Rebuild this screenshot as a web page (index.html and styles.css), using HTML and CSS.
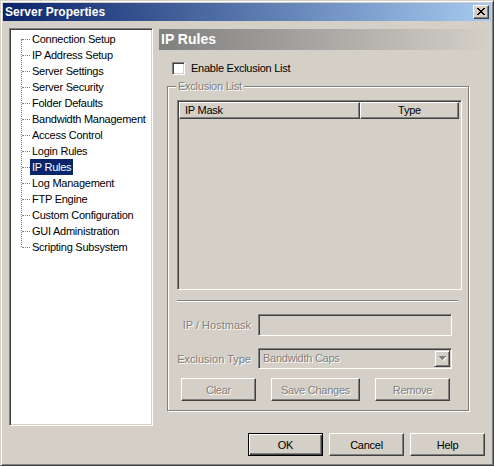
FILE: index.html
```html
<!DOCTYPE html>
<html>
<head>
<meta charset="utf-8">
<title>Server Properties</title>
<link rel="stylesheet" href="styles.css">
</head>
<body>
<div class="window">
  <div class="titlebar">
    <span class="title">Server Properties</span>
    <span class="close-btn">
      <svg width="8" height="7" viewBox="0 0 8 7" shape-rendering="crispEdges"><path fill="#000" d="M0 0h2v1H0zM6 0h2v1H6zM1 1h2v1H1zM5 1h2v1H5zM2 2h4v1H2zM3 3h2v1H3zM2 4h4v1H2zM1 5h2v1H1zM5 5h2v1H5zM0 6h2v1H0zM6 6h2v1H6z"/></svg>
    </span>
  </div>
  <div class="main">
    <div class="tree">
      <ul class="tree-list">
        <li><span>Connection Setup</span></li>
        <li><span>IP Address Setup</span></li>
        <li><span>Server Settings</span></li>
        <li><span>Server Security</span></li>
        <li><span>Folder Defaults</span></li>
        <li><span>Bandwidth Management</span></li>
        <li><span>Access Control</span></li>
        <li><span>Login Rules</span></li>
        <li><span class="selected">IP Rules</span></li>
        <li><span>Log Management</span></li>
        <li><span>FTP Engine</span></li>
        <li><span>Custom Configuration</span></li>
        <li><span>GUI Administration</span></li>
        <li><span>Scripting Subsystem</span></li>
      </ul>
    </div>
    <div class="pane">
      <div class="pane-header">IP Rules</div>
      <div class="check-row">
        <span class="checkbox"></span>
        <span class="check-label">Enable Exclusion List</span>
      </div>
      <div class="group">
        <div class="group-label disabled">Exclusion List</div>
        <div class="listview">
          <div class="lv-header">
            <div class="lv-col lv-col1">IP Mask</div>
            <div class="lv-col lv-col2">Type</div>
          </div>
        </div>
        <div class="separator"></div>
        <div class="form-row">
          <span class="form-label disabled">IP / Hostmask</span>
          <div class="field"></div>
        </div>
        <div class="form-row row-select">
          <span class="form-label disabled">Exclusion Type</span>
          <div class="field combo">
            <span class="combo-text disabled">Bandwidth Caps</span>
            <span class="combo-btn">
              <svg width="8" height="5" viewBox="0 0 8 5" shape-rendering="crispEdges">
                <path fill="#fff" d="M1 1h7v1H1zM2 2h5v1H2zM3 3h3v1H3zM4 4h1v1H4z"/>
                <path fill="#808080" d="M0 0h7v1H0zM1 1h5v1H1zM2 2h3v1H2zM3 3h1v1H3z"/>
              </svg>
            </span>
          </div>
        </div>
        <div class="group-buttons">
          <button class="btn btn-clear disabled">Clear</button>
          <button class="btn btn-save disabled">Save Changes</button>
          <button class="btn btn-remove disabled">Remove</button>
        </div>
      </div>
    </div>
  </div>
  <div class="footer">
    <button class="btn btn-default">OK</button>
    <button class="btn">Cancel</button>
    <button class="btn">Help</button>
  </div>
</div>
</body>
</html>
```
FILE: styles.css
```css
* { box-sizing: border-box; }
html, body { margin: 0; padding: 0; }
body {
  background: #d4d0c8;
  font-family: "Liberation Sans", Arial, sans-serif;
  font-size: 11px;
  letter-spacing: -0.25px;
  color: #000;
}
.window {
  width: 494px;
  height: 466px;
  background: #d4d0c8;
  border: 1px solid;
  border-color: #d4d0c8 #404040 #404040 #d4d0c8;
  box-shadow: inset 1px 1px #fff, inset -1px -1px #808080;
  padding: 2px;
  display: flex;
  flex-direction: column;
}
.titlebar {
  height: 18px;
  flex: none;
  display: flex;
  align-items: flex-start;
  justify-content: space-between;
  background: linear-gradient(to right, #0a246a, #a6caf0);
}
.title {
  color: #fff;
  font-weight: bold;
  font-size: 12px;
  letter-spacing: 0;
  line-height: 18px;
  padding-left: 2px;
}
.close-btn {
  width: 16px;
  height: 14px;
  margin: 2px 2px 0 0;
  background: #d4d0c8;
  border: 1px solid;
  border-color: #fff #404040 #404040 #fff;
  box-shadow: inset -1px -1px #808080;
  display: flex;
  align-items: center;
  justify-content: center;
  padding-bottom: 1px;
}
.close-btn svg { display: block; }

.main {
  display: flex;
  align-items: flex-start;
  padding: 7px 0 0 6px;
}
.tree {
  width: 144px;
  height: 398px;
  flex: none;
  background: #fff;
  border: 1px solid;
  border-color: #808080 #fff #fff #808080;
  box-shadow: inset 1px 1px #404040, inset -1px -1px #d4d0c8;
}
.tree-list {
  list-style: none;
  margin: 0;
  padding: 2px 0 0 1px;
  position: relative;
}
.tree-list::before {
  content: "";
  position: absolute;
  left: 11px;
  top: 10px;
  height: 208px;
  border-left: 1px dotted #808080;
}
.tree-list li {
  position: relative;
  height: 16px;
  line-height: 16px;
  padding-left: 19px;
  white-space: nowrap;
}
.tree-list li::before {
  content: "";
  position: absolute;
  left: 11px;
  top: 8px;
  width: 8px;
  border-top: 1px dotted #808080;
}
.tree-list span {
  display: inline-block;
  padding: 0 2px;
  height: 16px;
}
.tree-list span.selected {
  background: #0a246a;
  color: #fff;
}

.pane {
  flex: 1;
  margin: 1px 0 0 6px;
  display: flex;
  flex-direction: column;
}
.pane-header {
  height: 21px;
  line-height: 20px;
  padding-left: 2px;
  color: #fff;
  font-weight: bold;
  font-size: 14px;
  letter-spacing: 0;
  background: linear-gradient(to right, #808080, #d4d0c8);
}
.check-row {
  display: flex;
  align-items: center;
  height: 13px;
  margin: 12px 0 0 13px;
}
.checkbox {
  width: 13px;
  height: 13px;
  background: #fff;
  border: 1px solid;
  border-color: #808080 #fff #fff #808080;
  box-shadow: inset 1px 1px #404040, inset -1px -1px #d4d0c8;
}
.check-label {
  margin-left: 6px;
  line-height: 13px;
}
.disabled {
  color: #808080;
  text-shadow: 1px 1px 0 #fff;
}
.group {
  width: 302px;
  height: 325px;
  margin: 11px 0 0 8px;
  border: 1px solid #808080;
  box-shadow: inset 1px 1px #fff, 1px 1px #fff;
  display: flex;
  flex-direction: column;
  align-items: flex-start;
}
.group-label {
  margin: -7px 0 0 8px;
  padding: 0 2px;
  line-height: 13px;
  background: #d4d0c8;
}
.listview {
  width: 285px;
  height: 190px;
  margin: 7px 0 0 9px;
  border: 1px solid;
  border-color: #808080 #fff #fff #808080;
  box-shadow: inset 1px 1px #404040, inset -1px -1px #d4d0c8;
  padding: 1px;
}
.lv-header {
  display: flex;
  height: 17px;
}
.lv-col {
  height: 17px;
  line-height: 15px;
  border: 1px solid;
  border-color: #fff #404040 #404040 #fff;
  box-shadow: inset -1px -1px #808080;
}
.lv-col1 { width: 181px; padding-left: 5px; }
.lv-col2 { width: 99px; text-align: center; }
.separator {
  width: 281px;
  height: 2px;
  margin: 10px 0 0 9px;
  border-top: 1px solid #808080;
  border-bottom: 1px solid #fff;
}
.form-row {
  display: flex;
  align-items: center;
  margin-top: 12px;
  height: 22px;
}
.row-select { height: 21px; }
.form-label {
  width: 83px;
  text-align: right;
  margin-right: 7px;
  letter-spacing: 0;
}
.field {
  width: 194px;
  height: 100%;
  background: #d4d0c8;
  border: 1px solid;
  border-color: #808080 #fff #fff #808080;
  box-shadow: inset 1px 1px #404040, inset -1px -1px #d4d0c8;
}
.combo {
  display: flex;
  align-items: stretch;
  justify-content: space-between;
  padding: 1px;
}
.combo-text {
  line-height: 17px;
  padding-left: 3px;
}
.combo-btn {
  width: 16px;
  background: #d4d0c8;
  border: 1px solid;
  border-color: #d4d0c8 #404040 #404040 #d4d0c8;
  box-shadow: inset 1px 1px #fff, inset -1px -1px #808080;
  display: flex;
  align-items: center;
  justify-content: center;
  padding: 0 0 0 1px;
}
.combo-btn svg { display: block; }
.group-buttons {
  display: flex;
  margin: 9px 0 0 13px;
}
.btn {
  width: 75px;
  height: 23px;
  padding: 0;
  background: #d4d0c8;
  border: 1px solid;
  border-color: #fff #404040 #404040 #fff;
  box-shadow: inset -1px -1px #808080;
  font: inherit;
  letter-spacing: inherit;
  color: #000;
}
.btn.disabled { color: #808080; text-shadow: 1px 1px 0 #fff; }
.btn-save { width: 89px; margin-left: 15px; }
.btn-remove { margin-left: 15px; }
.btn-default {
  border-color: #000;
  box-shadow: inset 1px 1px #fff, inset -1px -1px #404040, inset -2px -2px #808080;
}
.footer {
  display: flex;
  justify-content: flex-end;
  gap: 6px;
  margin-top: 7px;
  padding-right: 6px;
}
```
